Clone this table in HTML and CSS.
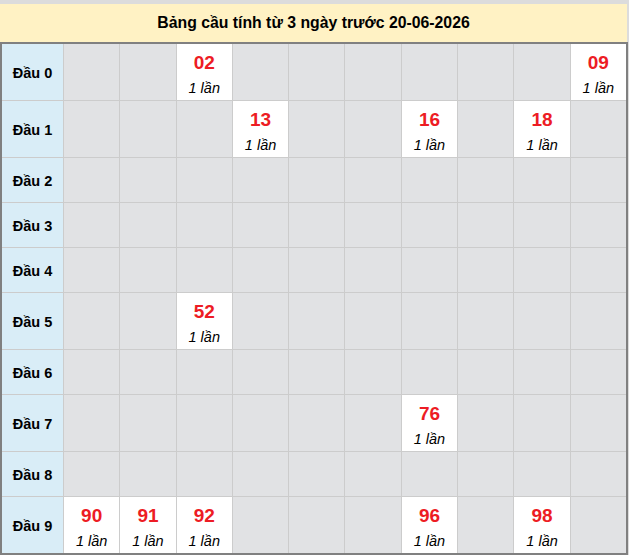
FILE: index.html
```html
<!DOCTYPE html>
<html lang="vi">
<head>
<meta charset="utf-8">
<link rel="stylesheet" href="styles.css">
</head>
<body>
<div class="wrap">
  <div class="title">Bảng cầu tính từ 3 ngày trước 20-06-2026</div>
  <div class="grid">
    <div class="lbl tall">Đầu 0</div>
    <div class="c"></div><div class="c"></div>
    <div class="c hit"><span class="num">02</span><span class="cnt">1 lần</span></div>
    <div class="c"></div><div class="c"></div><div class="c"></div><div class="c"></div><div class="c"></div><div class="c"></div>
    <div class="c hit"><span class="num">09</span><span class="cnt">1 lần</span></div>

    <div class="lbl tall">Đầu 1</div>
    <div class="c"></div><div class="c"></div><div class="c"></div>
    <div class="c hit"><span class="num">13</span><span class="cnt">1 lần</span></div>
    <div class="c"></div><div class="c"></div>
    <div class="c hit"><span class="num">16</span><span class="cnt">1 lần</span></div>
    <div class="c"></div>
    <div class="c hit"><span class="num">18</span><span class="cnt">1 lần</span></div>
    <div class="c"></div>

    <div class="lbl">Đầu 2</div>
    <div class="c"></div><div class="c"></div><div class="c"></div><div class="c"></div><div class="c"></div><div class="c"></div><div class="c"></div><div class="c"></div><div class="c"></div><div class="c"></div>

    <div class="lbl">Đầu 3</div>
    <div class="c"></div><div class="c"></div><div class="c"></div><div class="c"></div><div class="c"></div><div class="c"></div><div class="c"></div><div class="c"></div><div class="c"></div><div class="c"></div>

    <div class="lbl">Đầu 4</div>
    <div class="c"></div><div class="c"></div><div class="c"></div><div class="c"></div><div class="c"></div><div class="c"></div><div class="c"></div><div class="c"></div><div class="c"></div><div class="c"></div>

    <div class="lbl tall">Đầu 5</div>
    <div class="c"></div><div class="c"></div>
    <div class="c hit"><span class="num">52</span><span class="cnt">1 lần</span></div>
    <div class="c"></div><div class="c"></div><div class="c"></div><div class="c"></div><div class="c"></div><div class="c"></div><div class="c"></div>

    <div class="lbl">Đầu 6</div>
    <div class="c"></div><div class="c"></div><div class="c"></div><div class="c"></div><div class="c"></div><div class="c"></div><div class="c"></div><div class="c"></div><div class="c"></div><div class="c"></div>

    <div class="lbl tall">Đầu 7</div>
    <div class="c"></div><div class="c"></div><div class="c"></div><div class="c"></div><div class="c"></div><div class="c"></div>
    <div class="c hit"><span class="num">76</span><span class="cnt">1 lần</span></div>
    <div class="c"></div><div class="c"></div><div class="c"></div>

    <div class="lbl">Đầu 8</div>
    <div class="c"></div><div class="c"></div><div class="c"></div><div class="c"></div><div class="c"></div><div class="c"></div><div class="c"></div><div class="c"></div><div class="c"></div><div class="c"></div>

    <div class="lbl tall">Đầu 9</div>
    <div class="c hit"><span class="num">90</span><span class="cnt">1 lần</span></div>
    <div class="c hit"><span class="num">91</span><span class="cnt">1 lần</span></div>
    <div class="c hit"><span class="num">92</span><span class="cnt">1 lần</span></div>
    <div class="c"></div><div class="c"></div><div class="c"></div>
    <div class="c hit"><span class="num">96</span><span class="cnt">1 lần</span></div>
    <div class="c"></div>
    <div class="c hit"><span class="num">98</span><span class="cnt">1 lần</span></div>
    <div class="c"></div>
  </div>
</div>
</body>
</html>
```
FILE: styles.css
```css
html, body {
  margin: 0;
  padding: 0;
  background: #dcdcdc;
  font-family: "Liberation Sans", Arial, sans-serif;
}
.wrap {
  padding-top: 4px;
  width: 629px;
}
.title {
  width: 627px;
  height: 38px;
  background: #fff2c4;
  display: flex;
  align-items: center;
  justify-content: center;
  font-weight: bold;
  font-size: 15.8px;
  color: #000;
}
.grid {
  width: 628px;
  box-sizing: border-box;
  border: 2px solid #808080;
  background: #cccccc;
  display: grid;
  grid-template-columns: 61px repeat(10, 1fr);
  grid-template-rows: 56px 56px 44px 44px 44px 56px 44px 56px 44px 56px;
  gap: 1px;
}
.lbl {
  background: #d9edf7;
  display: flex;
  align-items: center;
  justify-content: center;
  padding-top: 2px;
  box-sizing: border-box;
  font-weight: bold;
  font-size: 14.5px;
  color: #000;
}
.c {
  background: #e1e2e4;
}
.c.hit {
  background: #ffffff;
  display: flex;
  flex-direction: column;
  align-items: center;
  padding-top: 9px;
  box-sizing: border-box;
}
.num {
  font-weight: bold;
  font-size: 19px;
  line-height: 20px;
  color: #ed1c24;
}
.cnt {
  margin-top: 6px;
  font-style: italic;
  font-size: 14.5px;
  line-height: 18px;
  color: #000;
}
```
